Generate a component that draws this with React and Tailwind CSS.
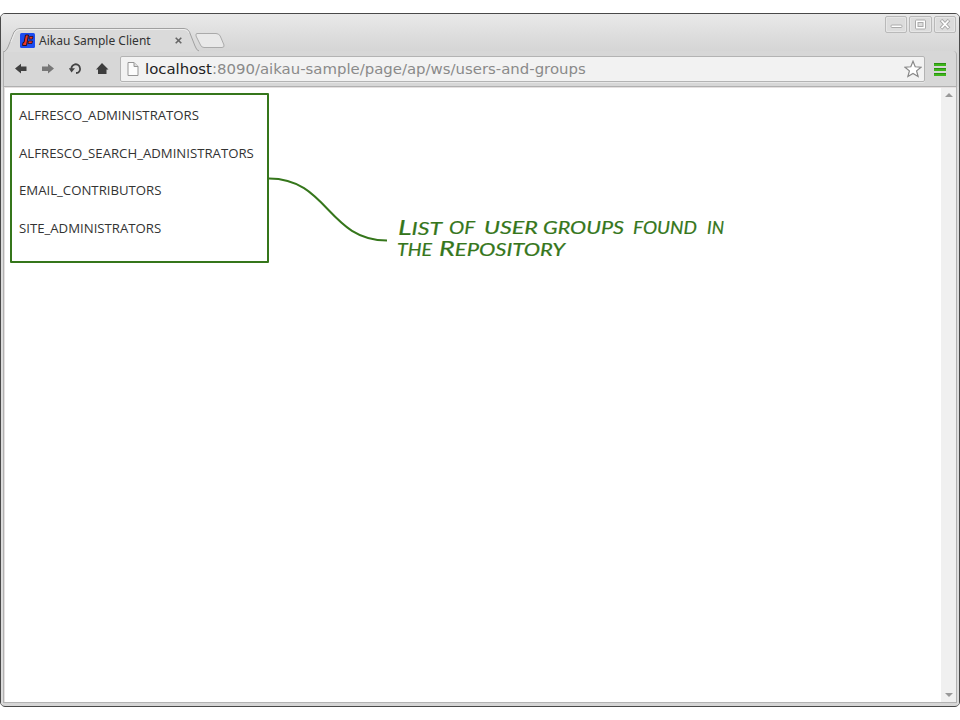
import React from "react";

const groups = [
  "ALFRESCO_ADMINISTRATORS",
  "ALFRESCO_SEARCH_ADMINISTRATORS",
  "EMAIL_CONTRIBUTORS",
  "SITE_ADMINISTRATORS",
];

const labelWords = [
  { text: "List", x: 398, y: 234.5, w: 44 },
  { text: "of", x: 449, y: 234, w: 26 },
  { text: "user", x: 484, y: 234, w: 54 },
  { text: "groups", x: 543, y: 234, w: 81 },
  { text: "found", x: 633, y: 234, w: 64 },
  { text: "in", x: 707, y: 234, w: 17 },
  { text: "the", x: 397, y: 256, w: 35 },
  { text: "Repository", x: 439, y: 256, w: 126 },
];

function WindowButton({ width, children }) {
  return (
    <div className={`${width} h-[17px] rounded-[2px] border border-[#b9b9b9] bg-[#dcdcdc] shadow-[inset_0_0_0_1px_#e6e6e6]`}>
      <svg className="block h-full w-full" viewBox="0 0 20 15" fill="none">{children}</svg>
    </div>
  );
}

function TitleBar() {
  return (
    <div className="relative flex h-[37px] shrink-0 bg-linear-to-b from-[#e9e9e9] to-[#d5d5d5]">
      <svg className="absolute left-0 top-0 h-[38px] w-[240px]" viewBox="0 0 240 38" fill="none">
        <path d="M3 38 Q6 36 7 33 L13 18 Q15 14.500 19 14.500 H183 Q187 14.500 188.500 18 L194 32 Q195.500 36.500 198 37 V38 Z" fill="#dadada" />
        <path d="M3 38 Q6 36 7 33 L13 18 Q15 14.500 19 14.500 H183 Q187 14.500 188.500 18 L194 32 Q195.500 36.500 198 37" stroke="#a0a0a0" />
        <path d="M10 28 L14 18.500 Q15.500 15.500 19 15.500 H183 Q186.500 15.500 188 19" stroke="#eeeeee" />
        <path d="M196 19.500 H215 Q218 19.500 219.200 22 L223 31 Q223.500 33.500 221 33.500 H203 Q200.500 33.500 199.500 31 L195 22 Q194.500 19.500 196 19.500Z" fill="#e9e9e9" stroke="#aaaaaa" />
      </svg>
      <div className="relative ml-[19px] mt-[18px] flex h-[17px] w-[166px] items-center">
        <svg className="h-[15px] w-[15px]" viewBox="0 0 15 15" fill="none">
          <rect width="15" height="15" rx="1.500" fill="#1c4cf0" />
          <path d="M5.500 2 H8.500 L6.500 12.500 H2.500 L3 9.500 H4Z" fill="#ee3524" stroke="#241024" />
          <path d="M9.500 3.500 H13 L12.500 6 H9Z M8.500 8 H12.500 L12 10.500 H8Z" fill="#ee3524" stroke="#241024" strokeWidth=".8" />
        </svg>
        <span className="ml-[4px] w-[136px] whitespace-nowrap font-['Noto_Sans',sans-serif] text-[12px] leading-[17px] text-[#333333]">Aikau Sample Client</span>
        <svg className="h-[7px] w-[7px]" viewBox="0 0 7 7"><path d="M.7 .7 6.300 6.300 M6.300 .7 .7 6.300" stroke="#666666" strokeWidth="1.600" /></svg>
      </div>
      <div className="ml-auto mr-[3px] mt-[2px] flex gap-[2px]">
        <WindowButton width="w-[22px]">
          <rect x="5" y="8" width="11" height="2.500" rx="1" fill="#fff" stroke="#aaa" />
        </WindowButton>
        <WindowButton width="w-[23px]">
          <rect x="5" y="3" width="10" height="9" rx="1" fill="#fff" stroke="#aaa" />
          <rect x="7.500" y="5.500" width="5" height="4" fill="#ddd" stroke="#aaa" />
        </WindowButton>
        <WindowButton width="w-[22px]">
          <path d="M6 3 14 11.500 M14 3 6 11.500" stroke="#aaa" strokeWidth="3.600" />
          <path d="M6.500 3.500 13.500 11 M13.500 3.500 6.500 11" stroke="#fff" strokeWidth="1.800" />
        </WindowButton>
      </div>
    </div>
  );
}

function Toolbar() {
  return (
    <div className="mx-[2px] flex h-[36px] shrink-0 items-center rounded-tr-[4px] border-x border-b border-[#b0b0b0] bg-[#d7d7d7]">
      <svg className="h-[35px] w-[116px] shrink-0" viewBox="4 51 116 35" fill="none">
        <path d="M15 68.500 L21 63.800 V66.500 H26.500 V71 H21 V73.500Z" fill="#404040" />
        <path d="M54 68.500 L48 63.800 V66.500 H42 V71 H48 V73.500Z" fill="#777777" />
        <path d="M76 73 C79 73 80.500 70.500 80 68 C79.500 65 76.500 63.500 74 64.700 C72 65.700 71 67.500 71.500 70" stroke="#444444" strokeWidth="1.800" />
        <path d="M68.800 68.300 H75 L71.500 72.500Z" fill="#444444" />
        <path d="M102 63 L108.500 69.500 H106.500 V74 H98 V69.500 H96Z" fill="#3d3d3d" />
      </svg>
      <div className="flex h-[26px] w-[805px] shrink-0 items-center rounded-[2px] border border-[#b3b3b3] bg-[#f2f2f2] shadow-[0_1px_0_#e6e6e6]">
        <svg className="ml-[6px] mt-px h-[16px] w-[12px] shrink-0" viewBox="0 0 12 16">
          <path d="M1 1.500 H7 L11 5.500 V14.500 H1Z" fill="#fcfcfc" stroke="#969696" />
          <path d="M7 1.500 V5.500 H11" fill="#ddd" stroke="#969696" />
        </svg>
        <div className="ml-[6px] whitespace-nowrap font-['DejaVu_Sans',sans-serif] text-[14.920px] leading-[24px] text-[#8a8a8a]">
          <span className="text-[#222222]">localhost</span>:8090/aikau-sample/page/ap/ws/users-and-groups
        </div>
        <svg className="ml-auto mr-[2px] h-[18px] w-[18px]" viewBox="0 0 18 18">
          <path d="M9 1.300 L11.200 6.800 L17 7.200 L12.600 10.900 L14.100 16.500 L9 13.400 L3.900 16.500 L5.400 10.900 L1 7.200 L6.800 6.800Z" fill="#fff" stroke="#888" strokeWidth="1.200" />
        </svg>
      </div>
      <div className="ml-[9px] mt-[2px] flex w-[12px] flex-col gap-[2px]">
        <div className="h-[3px] border-t border-[#2c8f13] bg-[#3eb51b]" />
        <div className="h-[3px] border-t border-[#2c8f13] bg-[#3eb51b]" />
        <div className="h-[3px] border-t border-[#2c8f13] bg-[#3eb51b]" />
      </div>
    </div>
  );
}

export default function App() {
  return (
    <div className="relative h-[720px] w-[960px] overflow-hidden bg-white pt-[13px]">
      <div className="flex h-[694px] w-[960px] flex-col overflow-hidden rounded-[5px] border border-[#494949] bg-[#d6d6d6]">
        <TitleBar />
        <Toolbar />
        <div className="flex min-h-0 flex-1 border-x-2 border-[#dcdcdc] pb-[3px]">
          <div className="flex flex-1 border-x border-b border-[#b2b2b2] bg-[#e4e0e0] pl-px pt-px">
            <div className="flex flex-1 bg-white">
              <main className="flex-1 pl-[5px] pt-[5px]">
                <ul className="flex h-[170px] w-[259px] flex-col rounded-[1px] border-2 border-[#35761b] pl-[7px] pt-[2px] font-['Open_Sans',sans-serif] text-[13.200px] text-[#333333]">
                  {groups.map((group) => (
                    <li key={group} className="h-[37.670px] whitespace-nowrap leading-[37.670px]">{group}</li>
                  ))}
                </ul>
              </main>
              <div className="flex w-[15px] flex-col items-center justify-between bg-[#f0f0f0] pb-[5px] pt-[5px]">
                <svg className="h-[4px] w-[8px]" viewBox="0 0 8 4"><path d="M0 4 4 0 8 4Z" fill="#999" /></svg>
                <svg className="h-[4px] w-[8px]" viewBox="0 0 8 4"><path d="M0 0 4 4 8 0Z" fill="#999" /></svg>
              </div>
            </div>
          </div>
        </div>
      </div>
      <svg className="absolute left-0 top-0 h-[720px] w-[960px]" viewBox="0 0 960 720" fill="none">
        <path d="M269 178.500 C328 178.500 328 240.500 387 240.500" stroke="#35761b" strokeWidth="2" />
        <g className="font-['Lato',sans-serif] text-[17px] uppercase italic" fill="#35761b" stroke="#35761b" strokeWidth=".2">
          {labelWords.map((word) => {
            const capital = /^[A-Z]/.test(word.text);
            return (
              <text key={word.text} x={word.x} y={word.y} textLength={word.w} lengthAdjust="spacingAndGlyphs">
                {capital && <tspan className="text-[21px]">{word.text[0]}</tspan>}
                {capital ? word.text.slice(1) : word.text}
              </text>
            );
          })}
        </g>
      </svg>
    </div>
  );
}
